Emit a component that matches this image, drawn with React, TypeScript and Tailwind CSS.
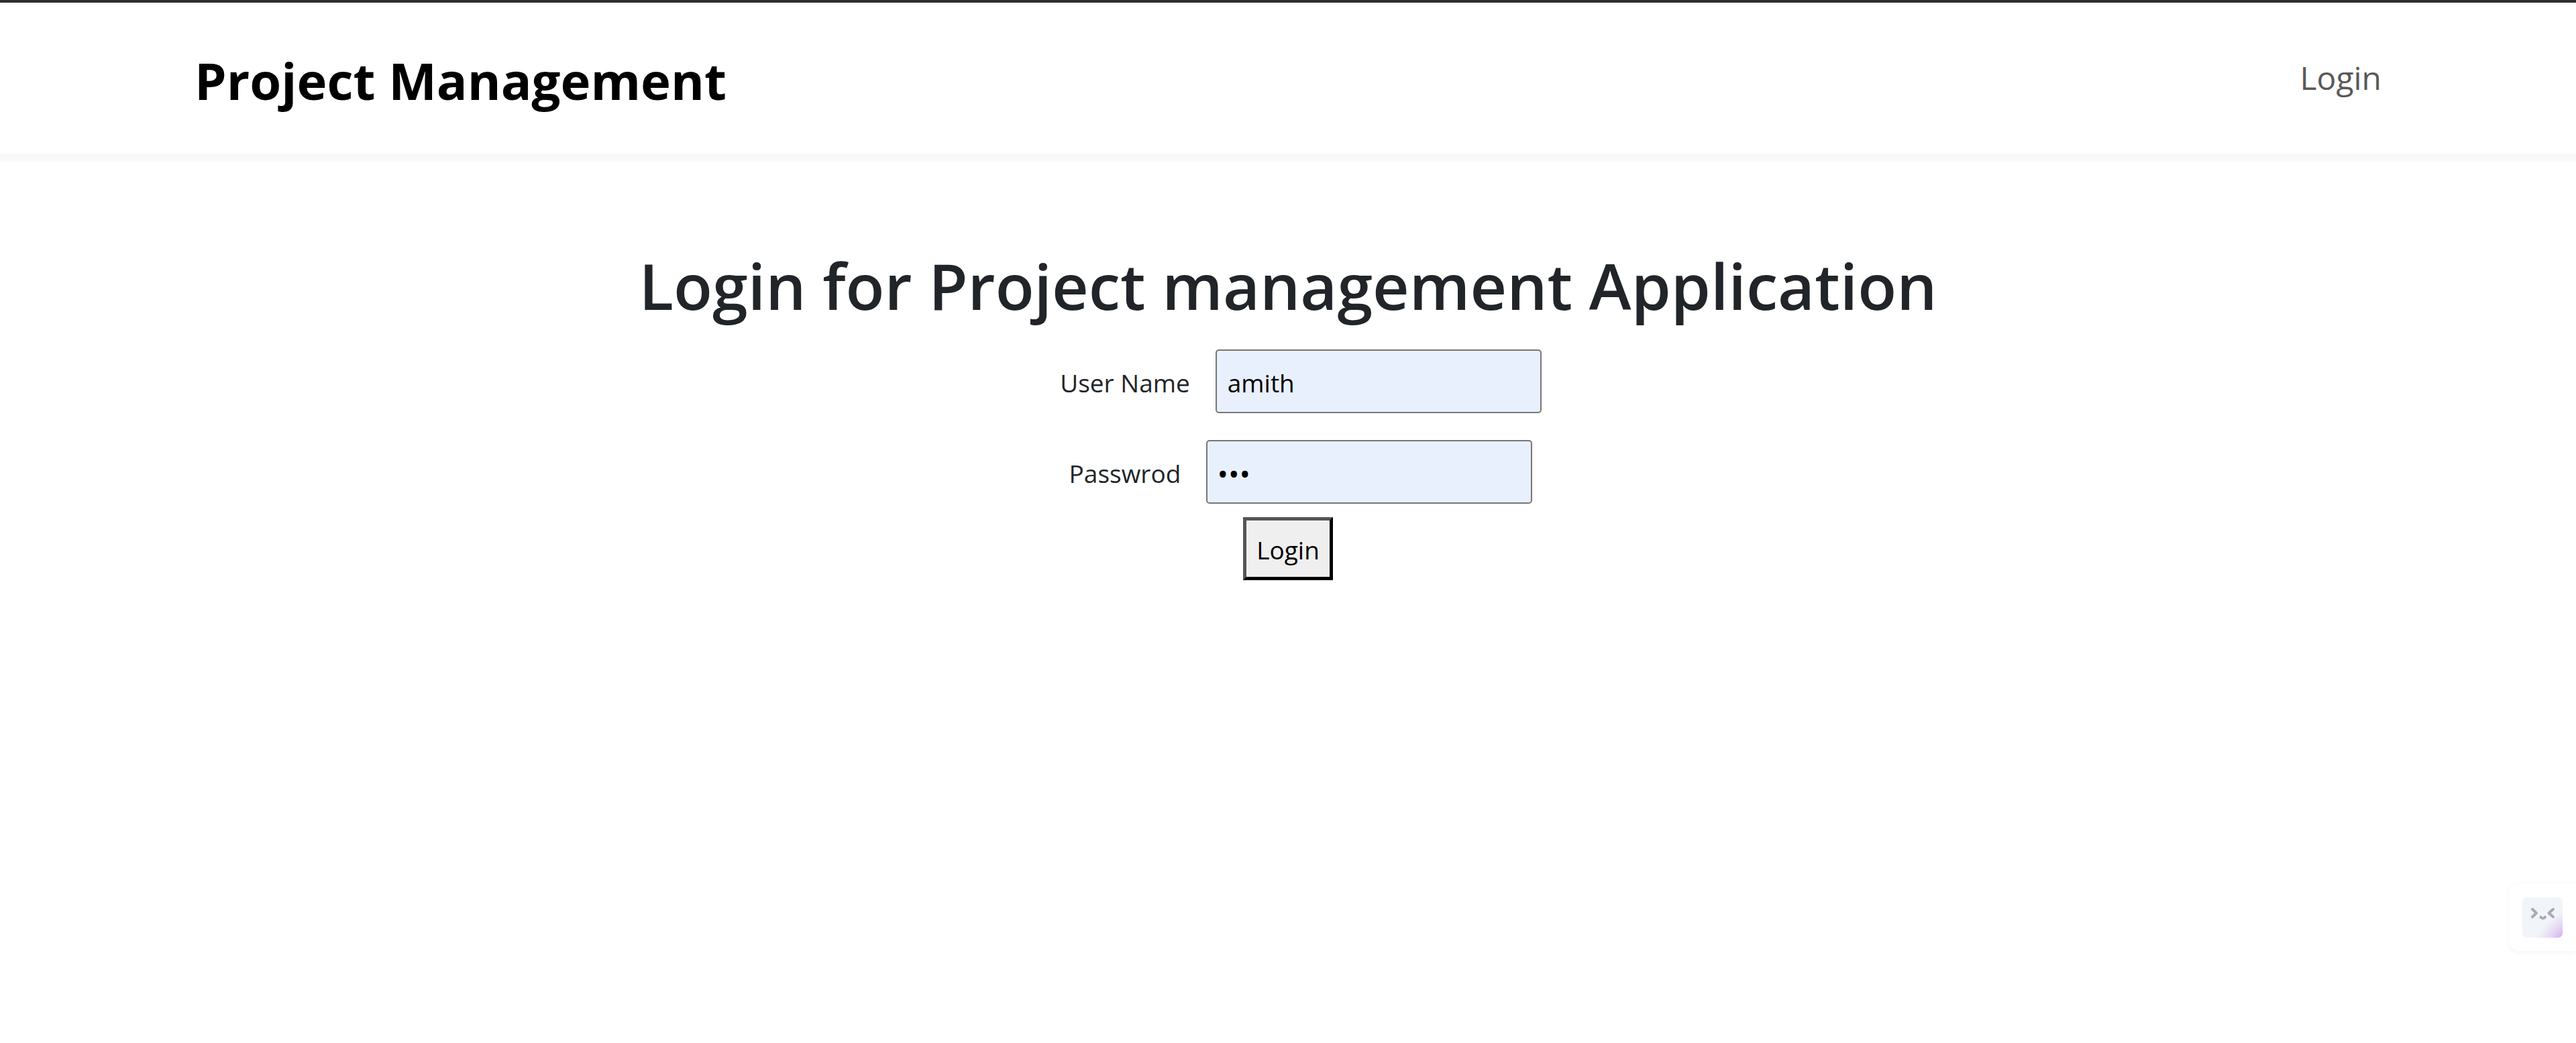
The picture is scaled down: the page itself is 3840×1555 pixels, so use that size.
import { useState } from "react";

function Header() {
  return (
    <header className="flex items-center justify-between border-t-4 border-b-12 border-t-[#2f2f32] border-b-[#f8f9fb] px-[290px] pt-14 pb-[57px]">
      <a href="#" className="pt-2 text-[76px] leading-[104px] font-bold text-black">
        Project Management
      </a>
      <nav>
        <a href="#login" className="text-[48px] leading-[80px] text-[#595959]">
          Login
        </a>
      </nav>
    </header>
  );
}

function AssistantTab() {
  return (
    <button
      type="button"
      aria-label="Open assistant"
      className="fixed right-0 bottom-[137px] flex h-[101px] w-[100px] items-center rounded-l-[16px] bg-white pl-5 shadow-[0_2px_10px_rgba(0,0,0,0.05)]"
    >
      <svg width="60" height="60" viewBox="0 0 60 60" fill="none">
        <defs>
          <radialGradient id="glow" cx="0" cy="0" r="1" gradientUnits="userSpaceOnUse" gradientTransform="translate(62 60) rotate(-135) scale(34 62)">
            <stop offset="0" stopColor="#cfa6ee" />
            <stop offset="0.45" stopColor="#e4d3f4" />
            <stop offset="1" stopColor="#f1f5f9" />
          </radialGradient>
        </defs>
        <rect width="60" height="60" rx="7" fill="url(#glow)" />
        <g stroke="#a7abb3" strokeWidth="4" strokeLinecap="round" strokeLinejoin="round">
          <path d="M15 17.5 21 23.2 15 29" />
          <path d="M46 17.5 39.500 23.200 46 29" />
          <path d="M27.500 29.200C29 31.800 32.500 31.800 34 29.200" />
        </g>
      </svg>
    </button>
  );
}

export default function App() {
  const [user, setUser] = useState("amith");
  const [password, setPassword] = useState("abc");

  return (
    <div className="min-h-screen bg-white font-['Open_Sans','Noto_Sans',sans-serif] text-[37px] leading-[60px] text-[#212529]">
      <Header />
      <main className="pt-[124px]">
        <h1 className="mb-6 text-center text-[95px] leading-[120px] font-semibold">
          Login for Project management Application
        </h1>
        <form onSubmit={(e) => e.preventDefault()} className="flex flex-col items-center">
          <div className="mt-3 mb-10 flex items-center">
            <label htmlFor="user" className="mx-[38px] pt-1">
              User Name
            </label>
            <input
              id="user"
              type="text"
              value={user}
              onChange={(e) => setUser(e.target.value)}
              className="h-[95px] w-[486px] rounded-[5px] border-2 border-[#767676] bg-[#e8f0fe] px-4 pt-1 text-black"
            />
          </div>
          <div className="mb-5 flex items-center">
            <label htmlFor="password" className="mx-[38px] pt-1">
              Passwrod
            </label>
            <input
              id="password"
              type="password"
              value={password}
              onChange={(e) => setPassword(e.target.value)}
              className="h-[95px] w-[486px] rounded-[5px] border-2 border-[#767676] bg-[#e8f0fe] px-[14px] pt-1 text-[44px] text-black"
            />
          </div>
          <button
            type="submit"
            className="border-[5px] border-t-[#555] border-r-black border-b-black border-l-[#555] bg-[#efefef] px-[15px] pt-[14px] pb-[10px] text-black"
          >
            Login
          </button>
        </form>
      </main>
      <AssistantTab />
    </div>
  );
}
